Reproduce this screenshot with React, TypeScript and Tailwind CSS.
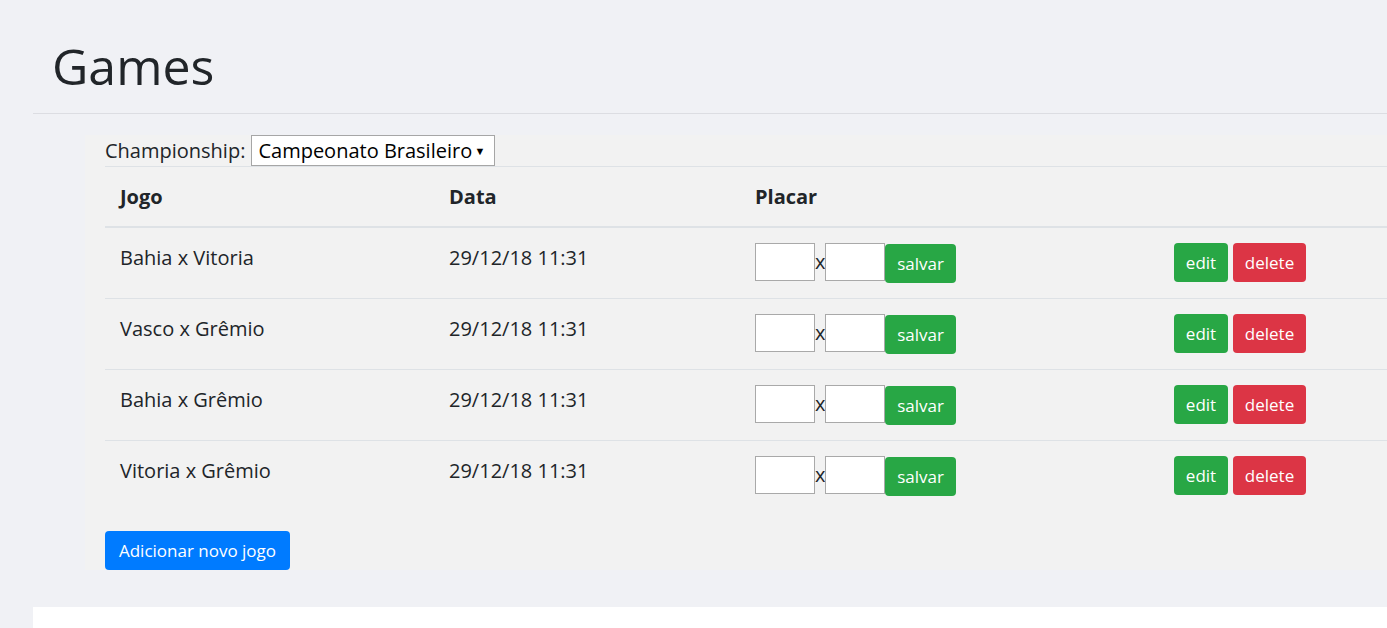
const games = [
  { jogo: 'Bahia x Vitoria', data: '29/12/18 11:31' },
  { jogo: 'Vasco x Grêmio', data: '29/12/18 11:31' },
  { jogo: 'Bahia x Grêmio', data: '29/12/18 11:31' },
  { jogo: 'Vitoria x Grêmio', data: '29/12/18 11:31' },
];

const GamesPage = () => {
  return (
    <div className="min-h-screen flex bg-[#f0f1f5] overflow-hidden text-[#212529] font-['Open_Sans',sans-serif]">
      <div className="w-[33px] shrink-0" />
      <div className="flex-1 min-w-0 flex flex-col">
        <div className="h-[114px] pt-[36px] pl-[19px] border-b border-[#dcdde2]">
          <h1 className="text-[50px] leading-[60px] font-normal">Games</h1>
        </div>

        <div className="pt-[21px] pl-[52px] pb-[37px]">
          <div className="bg-[#f2f2f2] pl-[20px]">
            <div className="flex items-center gap-[6px] text-[20px] leading-[30px]">
              <span>Championship:</span>
              <div className="h-[31px] w-[244px] bg-white border border-[#a6a6a6] flex items-center justify-between pl-[6px] pr-[9px] text-black">
                <span>Campeonato Brasileiro</span>
                <span className="text-[11px]">▼</span>
              </div>
            </div>

            <table className="w-[1400px] border-collapse text-[20px] leading-[30px]">
              <colgroup>
                <col className="w-[329px]" />
                <col className="w-[306px]" />
                <col className="w-[419px]" />
                <col />
              </colgroup>
              <thead>
                <tr>
                  <th className="text-left font-bold px-[15px] pt-[15px] pb-[14px] border-t border-b-2 border-[#dee2e6]">Jogo</th>
                  <th className="text-left font-bold px-[15px] pt-[15px] pb-[14px] border-t border-b-2 border-[#dee2e6]">Data</th>
                  <th className="text-left font-bold px-[15px] pt-[15px] pb-[14px] border-t border-b-2 border-[#dee2e6]">Placar</th>
                  <th className="px-[15px] pt-[15px] pb-[14px] border-t border-b-2 border-[#dee2e6]"></th>
                </tr>
              </thead>
              <tbody>
                {games.map((g, i) => (
                  <tr key={i}>
                    <td className={`align-top p-[15px] border-[#dee2e6] ${i > 0 ? 'border-t' : ''}`}>{g.jogo}</td>
                    <td className={`align-top p-[15px] border-[#dee2e6] ${i > 0 ? 'border-t' : ''}`}>{g.data}</td>
                    <td className={`align-top p-[15px] border-[#dee2e6] ${i > 0 ? 'border-t' : ''}`}>
                      <div className="flex items-start">
                        <input className="w-[60px] h-[38px] bg-white border border-[#a9a9a9]" />
                        <span className="w-[10px] leading-[38px] text-center">x</span>
                        <input className="w-[60px] h-[38px] bg-white border border-[#a9a9a9]" />
                        <button className="mt-px h-[39px] w-[71px] rounded bg-[#28a745] text-white text-[17px]">
                          salvar
                        </button>
                      </div>
                    </td>
                    <td className={`align-top p-[15px] border-[#dee2e6] ${i > 0 ? 'border-t' : ''}`}>
                      <div className="flex gap-[5px]">
                        <button className="h-[39px] w-[54px] rounded bg-[#28a745] text-white text-[17px]">
                          edit
                        </button>
                        <button className="h-[39px] w-[73px] rounded bg-[#dc3545] text-white text-[17px]">
                          delete
                        </button>
                      </div>
                    </td>
                  </tr>
                ))}
              </tbody>
            </table>

            <button className="mt-[20px] h-[39px] w-[185px] rounded bg-[#007bff] text-white text-[17px]">
              Adicionar novo jogo
            </button>
          </div>
        </div>

        <div className="flex-1 bg-white" />
      </div>
    </div>
  );
};

export default GamesPage;
